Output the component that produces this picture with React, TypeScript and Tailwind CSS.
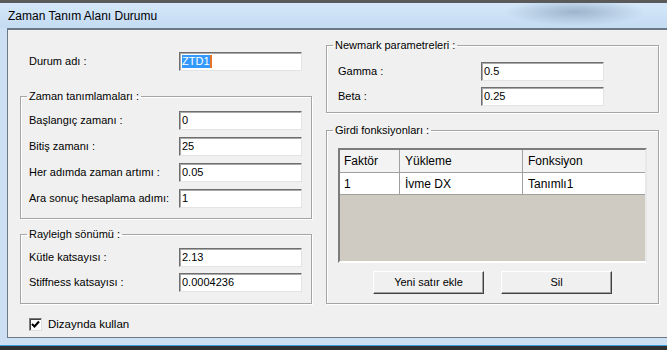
import type { ReactNode } from "react";

const ui = "font-['Liberation_Sans',Arial,sans-serif] text-[11px] text-black";

type FieldProps = { value: string; selected?: boolean };

const Field = ({ value, selected }: FieldProps) => (
  <div className="flex items-center w-[123px] h-[19px] pl-[2px] bg-white border border-t-[#6e6e6e] border-l-[#6e6e6e] border-r-[#e3e3e3] border-b-[#e3e3e3] shadow-[inset_1px_1px_0_#a9a9a9] leading-none">
    {selected ? (
      <>
        <span className="h-[13px] leading-[13px] bg-[#3399ff] text-white">{value}</span>
        <span className="w-[2px] h-[13px] bg-[#e8742a]" />
      </>
    ) : (
      value
    )}
  </div>
);

type RowProps = { label: string; value: string; labelClass: string; selected?: boolean };

const Row = ({ label, value, labelClass, selected }: RowProps) => (
  <div className="flex items-center">
    <span className={labelClass}>{label}</span>
    <Field value={value} selected={selected} />
  </div>
);

type GroupProps = { title: string; className: string; children: ReactNode };

const Group = ({ title, className, children }: GroupProps) => (
  <fieldset
    className={`border border-[#a5a5a5] shadow-[1px_1px_0_#fff,inset_1px_1px_0_#fff] ${className}`}
  >
    <legend className="ml-[6px] px-[2px] h-[12px] leading-[12px]">{title}</legend>
    {children}
  </fieldset>
);

const Button = ({ children }: { children: ReactNode }) => (
  <button
    type="button"
    className="w-[111px] h-[23px] bg-[#f0f0f0] border border-t-white border-l-white border-r-[#404040] border-b-[#404040] shadow-[inset_-1px_-1px_0_#a0a0a0] leading-none"
  >
    {children}
  </button>
);

const App = () => (
  <div className={`w-[667px] h-[350px] overflow-hidden flex flex-col bg-[#303030] ${ui}`}>
    <div className="h-[3px] bg-[#5a5a5a]" />
    <div className="h-[343px] flex flex-col bg-[#cde0f3] border-b border-[#3a9ee0]">
      {/* title bar */}
      <div className="h-[25px] flex items-center pl-[8px] pt-[1px] text-[12px] bg-[radial-gradient(ellipse_70px_14px_at_575px_9px,#9db4cc,transparent),linear-gradient(to_bottom,#d5e8fa,#c4dbf2)]">
        Zaman Tanım Alanı Durumu
      </div>

      {/* client */}
      <div className="flex-1 flex ml-[7px] mb-[7px] bg-[#f0f0f0] border-t-2 border-l border-b border-[#6b7885]">
        {/* left column */}
        <div className="flex flex-col w-[292px] ml-[12px] pt-[22px]">
          <div className="pl-[9px]">
            <Row label="Durum adı :" value="ZTD1" labelClass="w-[150px]" selected />
          </div>

          <Group title="Zaman tanımlamaları :" className="mt-[19px]">
            <div className="flex flex-col gap-[7px] pt-[9px] pb-[10px] pl-[8px]">
              <Row label="Başlangıç zamanı :" value="0" labelClass="w-[150px]" />
              <Row label="Bitiş zamanı :" value="25" labelClass="w-[150px]" />
              <Row label="Her adımda zaman artımı  :" value="0.05" labelClass="w-[150px]" />
              <Row label="Ara sonuç hesaplama adımı:" value="1" labelClass="w-[150px]" />
            </div>
          </Group>

          <Group title="Rayleigh sönümü :" className="mt-[9px]">
            <div className="flex flex-col gap-[6px] pt-[8px] pb-[11px] pl-[8px]">
              <Row label="Kütle katsayısı :" value="2.13" labelClass="w-[150px]" />
              <Row label="Stiffness katsayısı :" value="0.0004236" labelClass="w-[150px]" />
            </div>
          </Group>

          <div className="flex items-center gap-[6px] mt-[12px] pl-[9px]">
            <div className="w-[13px] h-[13px] flex items-center justify-center bg-white border border-t-[#7a7a7a] border-l-[#7a7a7a] border-r-[#dedede] border-b-[#dedede] shadow-[inset_1px_1px_0_#404040]">
              <svg width="9" height="9" viewBox="0 0 9 9">
                <path d="M1 4 L3.5 6.5 L8 1.5" fill="none" stroke="#000" strokeWidth="2" />
              </svg>
            </div>
            <span className="text-[11.5px]">Dizaynda kullan</span>
          </div>
        </div>

        {/* right column */}
        <div className="flex flex-col w-[333px] ml-[14px] pt-[9px]">
          <Group title="Newmark parametreleri :" className="">
            <div className="flex flex-col gap-[6px] pt-[11px] pb-[6px] pl-[11px]">
              <Row label="Gamma :" value="0.5" labelClass="w-[143px]" />
              <Row label="Beta :" value="0.25" labelClass="w-[143px]" />
            </div>
          </Group>

          <Group title="Girdi fonksiyonları :" className="mt-[11px]">
            <div className="flex flex-col pt-[12px] pb-[9px] pl-[11px]">
              <div className="w-[309px] h-[115px] flex flex-col bg-[#cfcbc3] border-2 border-t-[#7c7c7c] border-l-[#7c7c7c] border-r-[#e8e8e8] border-b-white text-[12px]">
                <div className="flex h-[23px] bg-[#f3f3f3] border-b border-[#a0a0a0]">
                  <div className="w-[60px] pl-[4px] flex items-center border-r border-[#a0a0a0]">Faktör</div>
                  <div className="w-[123px] pl-[5px] flex items-center border-r border-[#a0a0a0]">Yükleme</div>
                  <div className="flex-1 pl-[5px] flex items-center">Fonksiyon</div>
                </div>
                <div className="flex h-[22px] bg-white border-b border-[#a0a0a0]">
                  <div className="w-[60px] pl-[4px] flex items-center border-r border-[#a0a0a0]">1</div>
                  <div className="w-[123px] pl-[5px] flex items-center border-r border-[#a0a0a0]">İvme DX</div>
                  <div className="flex-1 pl-[5px] flex items-center">Tanımlı1</div>
                </div>
              </div>
              <div className="flex justify-center gap-[17px] mt-[8px] pr-[11px]">
                <Button>Yeni satır ekle</Button>
                <Button>Sil</Button>
              </div>
            </div>
          </Group>
        </div>
      </div>
    </div>
  </div>
);

export default App;
